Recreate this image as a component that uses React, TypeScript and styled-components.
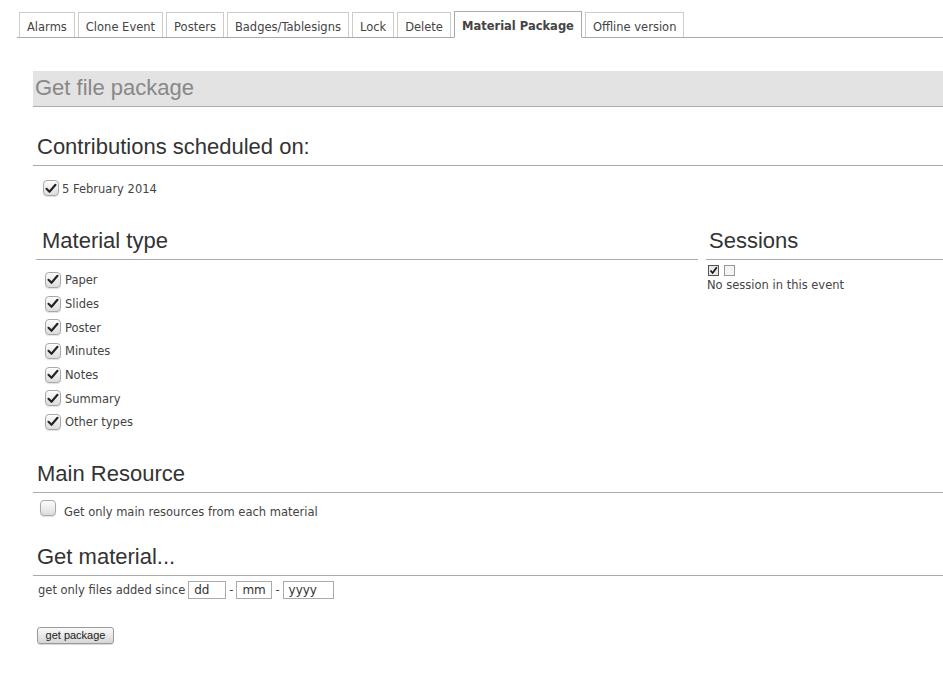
import React from "react";
import styled, { createGlobalStyle } from "styled-components";

const Global = createGlobalStyle`
  html, body { margin: 0; padding: 0; background: #fff; }
  body { font-family: "DejaVu Sans", Verdana, sans-serif; font-size: 11.5px; color: #444; overflow: hidden; }
`;

const Page = styled.div`
  width: 943px;
  height: 686px;
  overflow: hidden;
`;

const TabBar = styled.div`
  display: flex;
  align-items: flex-end;
  gap: 3px;
  margin: 11px 0 0 17px;
  padding-left: 2px;
  border-bottom: 1px solid #aaa;
  height: 26px;
`;

const Tab = styled.div<{ $active?: boolean }>`
  box-sizing: border-box;
  height: ${(p) => (p.$active ? 27 : 25)}px;
  margin-bottom: ${(p) => (p.$active ? -1 : 0)}px;
  padding: ${(p) => (p.$active ? 3 : 3)}px 7px 0;
  display: flex;
  align-items: center;
  border: 1px solid ${(p) => (p.$active ? "#aaa" : "#ccc")};
  border-bottom: ${(p) => (p.$active ? "1px solid #fff" : "none")};
  background: #fff;
  font-size: 11.5px;
  font-weight: ${(p) => (p.$active ? "bold" : "normal")};
  color: #444;
  white-space: nowrap;
`;

const Content = styled.div`
  margin-left: 33px;
  margin-top: 33px;
`;

const PageTitle = styled.div`
  height: 35px;
  background: #e3e3e3;
  border-bottom: 1px solid #aaa;
  font-family: "Liberation Sans", Arial, sans-serif;
  font-size: 22px;
  color: #888;
  padding-left: 2px;
  line-height: 33px;
`;

const Heading = styled.div<{ $pad?: number }>`
  font-family: "Liberation Sans", Arial, sans-serif;
  font-size: 22px;
  color: #333;
  border-bottom: 1px solid #aaa;
  padding-left: ${(p) => p.$pad ?? 4}px;
  line-height: 26px;
  padding-bottom: 5px;
`;

const Section = styled.div<{ $top: number }>`
  margin-top: ${(p) => p.$top}px;
`;

const Row = styled.label<{ $h?: number; $indent?: number; $gap?: number }>`
  display: flex;
  align-items: center;
  height: ${(p) => p.$h ?? 24}px;
  padding-left: ${(p) => p.$indent ?? 0}px;
  gap: ${(p) => p.$gap ?? 4}px;
  color: #444;
  font-size: 11.5px;
`;

const RowText = styled.span<{ $drop?: number }>`
  padding-top: ${(p) => p.$drop ?? 0}px;
`;

const Box = styled.span<{ $size?: number }>`
  box-sizing: border-box;
  width: ${(p) => p.$size ?? 16}px;
  height: ${(p) => p.$size ?? 16}px;
  border: 1px solid #a8a8a8;
  border-radius: 4px;
  background: linear-gradient(#fdfdfd, #dcdcdc);
  box-shadow: inset 0 1px 0 #fff, 0 1px 1px rgba(0,0,0,0.12);
  display: inline-flex;
  align-items: center;
  justify-content: center;
  flex: none;
`;

const Check = () => (
  <svg width="12" height="11" viewBox="0 0 12 11">
    <path d="M1.5 5.8 L4.5 8.8 L10.5 1.8" fill="none" stroke="#222" strokeWidth="2.1" strokeLinecap="round" strokeLinejoin="round" />
  </svg>
);

const CheckBox = ({ checked, size }: { checked?: boolean; size?: number }) => (
  <Box $size={size}>{checked ? <Check /> : null}</Box>
);

const Columns = styled.div`
  display: flex;
  gap: 8px;
  margin-top: 27px;
`;

const MaterialCol = styled.div`
  width: 662px;
  margin-left: 3px;
  flex: none;
`;

const SessionsCol = styled.div`
  flex: 1;
`;

const MaterialList = styled.div`
  padding-top: 8px;
  padding-left: 9px;
  display: flex;
  flex-direction: column;
`;

const SmallBoxes = styled.div`
  display: flex;
  gap: 5px;
  padding: 5px 0 0 2px;
`;

const SmallBox = styled.span<{ $on?: boolean }>`
  box-sizing: border-box;
  width: 11px;
  height: 11px;
  border: 1px solid ${(p) => (p.$on ? "#555" : "#999")};
  background: ${(p) => (p.$on ? "#e8e8e8" : "#f4f4f4")};
  display: inline-flex;
  align-items: center;
  justify-content: center;
`;

const Note = styled.div`
  padding-left: 1px;
  margin-top: 2px;
  font-size: 11.5px;
  color: #444;
`;

const DateRow = styled.div`
  display: flex;
  align-items: center;
  padding: 5px 0 0 5px;
  font-size: 11.5px;
  color: #444;
`;

const DateInput = styled.span<{ $w: number }>`
  box-sizing: border-box;
  width: ${(p) => p.$w}px;
  height: 18px;
  border: 1px solid #aaa;
  padding-left: 5px;
  display: inline-flex;
  align-items: center;
  font-size: 12px;
  color: #333;
  margin: 0 3px;
`;

const Button = styled.button`
  margin: 28px 0 0 4px;
  box-sizing: border-box;
  width: 77px;
  height: 17px;
  padding: 0;
  border: 1px solid #9a9a9a;
  border-radius: 3px;
  background: linear-gradient(#fafafa, #d6d6d6);
  box-shadow: 0 1px 0 rgba(0,0,0,0.15);
  font-family: "Liberation Sans", Arial, sans-serif;
  font-size: 11px;
  color: #222;
  line-height: 14px;
`;

const materials = ["Paper", "Slides", "Poster", "Minutes", "Notes", "Summary", "Other types"];
const tabs = ["Alarms", "Clone Event", "Posters", "Badges/Tablesigns", "Lock", "Delete", "Material Package", "Offline version"];

export default function App() {
  return (
    <Page>
      <Global />
      <TabBar>
        {tabs.map((t) => (
          <Tab key={t} $active={t === "Material Package"}>{t}</Tab>
        ))}
      </TabBar>
      <Content>
        <PageTitle>Get file package</PageTitle>
        <Section $top={27}>
          <Heading>Contributions scheduled on:</Heading>
          <Row $h={26} $indent={10} $gap={3} style={{ marginTop: 9 }}>
            <CheckBox checked />
            <RowText $drop={1}>5 February 2014</RowText>
          </Row>
        </Section>
        <Columns>
          <MaterialCol>
            <Heading $pad={6}>Material type</Heading>
            <MaterialList>
              {materials.map((m) => (
                <Row key={m} $h={23.7} $gap={4}>
                  <CheckBox checked />
                  <RowText $drop={1}>{m}</RowText>
                </Row>
              ))}
            </MaterialList>
          </MaterialCol>
          <SessionsCol>
            <Heading $pad={3}>Sessions</Heading>
            <SmallBoxes>
              <SmallBox $on>
                <svg width="9" height="9" viewBox="0 0 9 9">
                  <path d="M1.5 4.5 L3.6 7 L7.8 1.2" fill="none" stroke="#111" strokeWidth="1.6" />
                </svg>
              </SmallBox>
              <SmallBox />
            </SmallBoxes>
            <Note>No session in this event</Note>
          </SessionsCol>
        </Columns>
        <Section $top={27}>
          <Heading>Main Resource</Heading>
          <Row $h={26} $indent={7} $gap={8} style={{ marginTop: 2 }}>
            <CheckBox />
            <RowText $drop={9}>Get only main resources from each material</RowText>
          </Row>
        </Section>
        <Section $top={23}>
          <Heading>Get material...</Heading>
          <DateRow>
            get only files added since
            <DateInput $w={38}>dd</DateInput>-
            <DateInput $w={36}>mm</DateInput>-
            <DateInput $w={51}>yyyy</DateInput>
          </DateRow>
          <Button>get package</Button>
        </Section>
      </Content>
    </Page>
  );
}
